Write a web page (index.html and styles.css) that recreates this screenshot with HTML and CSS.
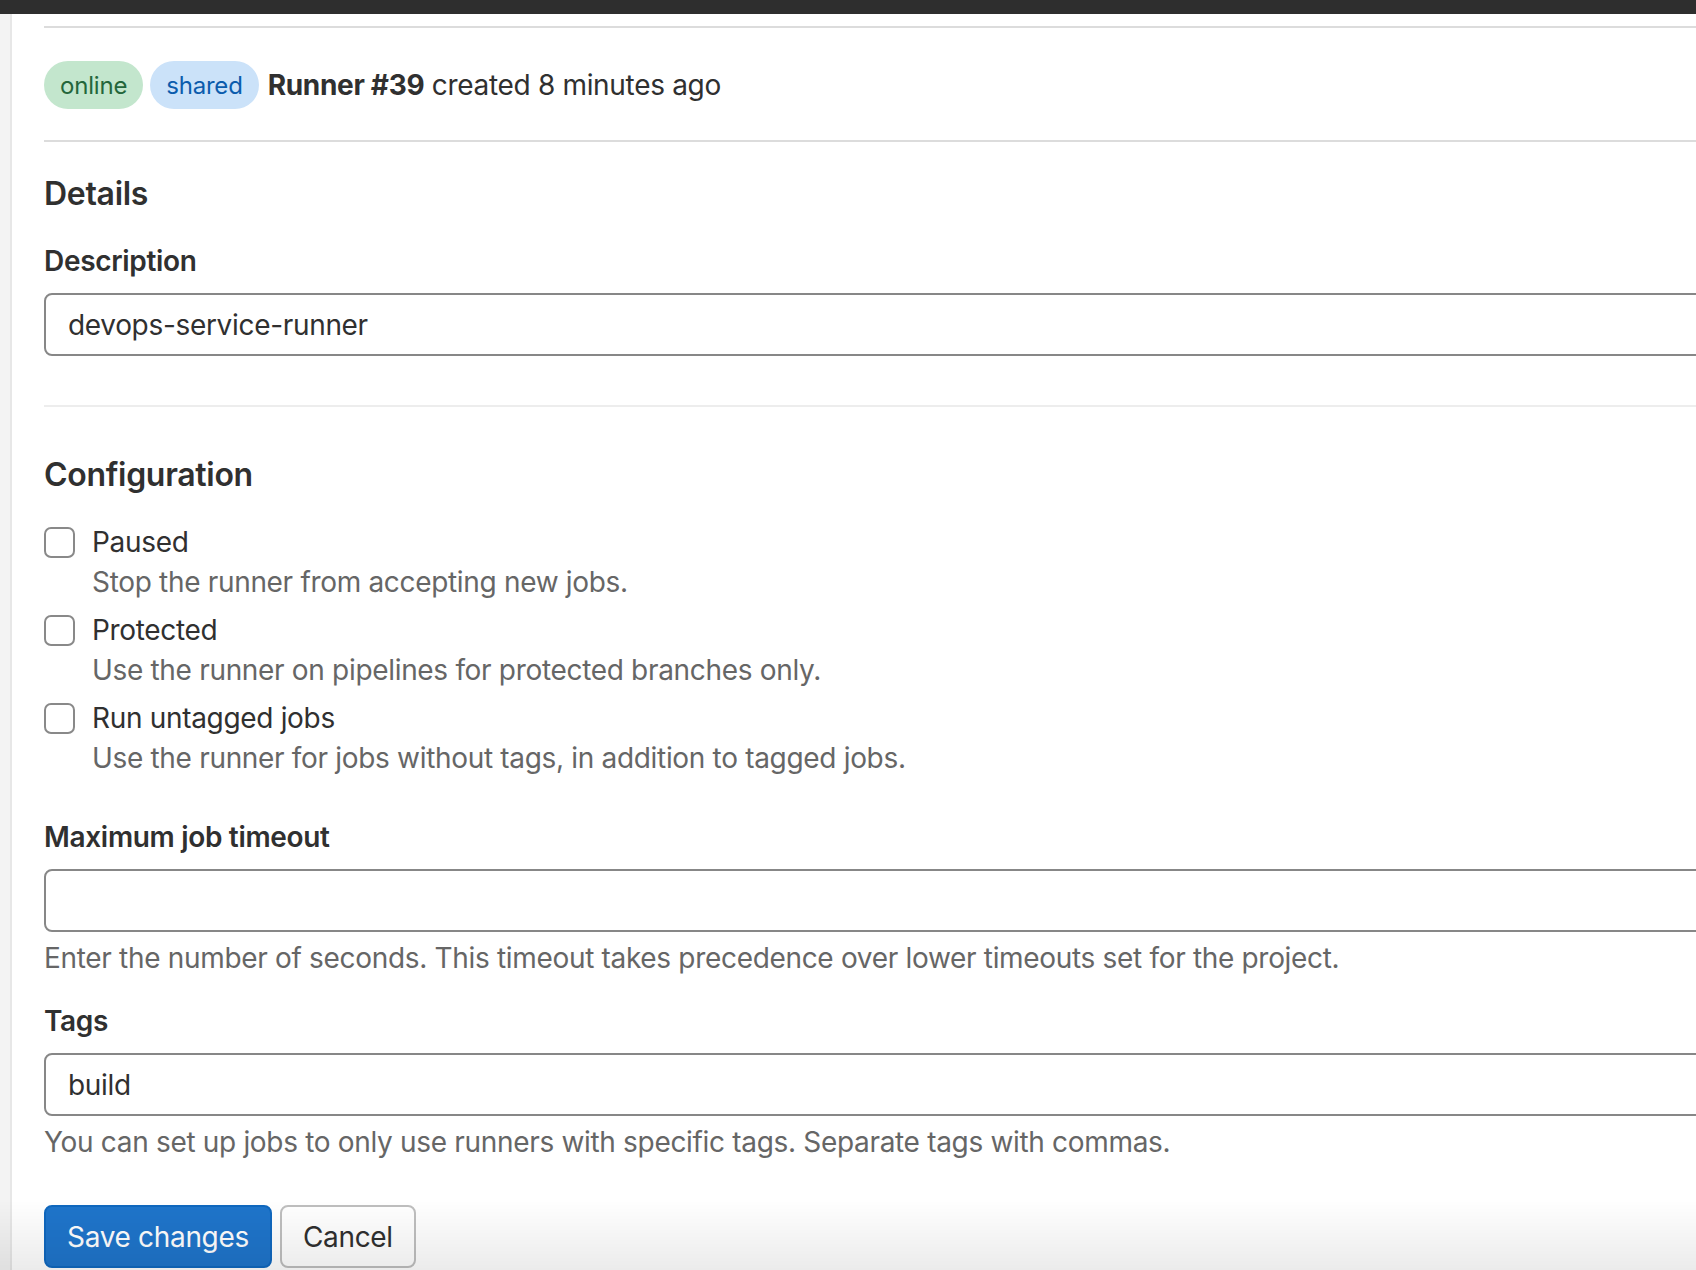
FILE: index.html
```html
<!DOCTYPE html>
<html lang="en">
<head>
<meta charset="utf-8">
<title>Runner #39</title>
<link rel="stylesheet" href="styles.css">
</head>
<body>
<div class="topbar"></div>
<div class="layout">
  <aside class="sidebar"></aside>
  <main class="content">
    <hr class="rule">
    <header class="runner-header">
      <span class="badge badge-online">online</span>
      <span class="badge badge-shared">shared</span>
      <span class="runner-title"><strong>Runner #39</strong> created 8 minutes ago</span>
    </header>
    <hr class="rule">
    <section class="section">
      <h2 class="section-title">Details</h2>
      <label class="field-label" for="desc">Description</label>
      <input class="text-input" id="desc" type="text" value="devops-service-runner">
    </section>
    <hr class="rule rule-light">
    <section class="section">
      <h2 class="section-title section-title-config">Configuration</h2>
      <div class="check-row">
        <span class="checkbox"></span>
        <div class="check-text">
          <div class="check-label">Paused</div>
          <div class="help">Stop the runner from accepting new jobs.</div>
        </div>
      </div>
      <div class="check-row">
        <span class="checkbox"></span>
        <div class="check-text">
          <div class="check-label">Protected</div>
          <div class="help">Use the runner on pipelines for protected branches only.</div>
        </div>
      </div>
      <div class="check-row">
        <span class="checkbox"></span>
        <div class="check-text">
          <div class="check-label">Run untagged jobs</div>
          <div class="help">Use the runner for jobs without tags, in addition to tagged jobs.</div>
        </div>
      </div>

      <label class="field-label field-label-timeout" for="timeout">Maximum job timeout</label>
      <input class="text-input" id="timeout" type="text" value="">
      <div class="help">Enter the number of seconds. This timeout takes precedence over lower timeouts set for the project.</div>

      <label class="field-label field-label-tags" for="tags">Tags</label>
      <input class="text-input" id="tags" type="text" value="build">
      <div class="help">You can set up jobs to only use runners with specific tags. Separate tags with commas.</div>

      <div class="actions">
        <button class="btn btn-primary" type="button">Save changes</button>
        <button class="btn btn-default" type="button">Cancel</button>
      </div>
    </section>
  </main>
</div>
<div class="bottom-fade"></div>
</body>
</html>
```

FILE: styles.css
```css
html, body {
  margin: 0;
  padding: 0;
  height: 100%;
  overflow: hidden;
  background: #ffffff;
}

body {
  font-family: Inter, "Noto Sans", "Liberation Sans", sans-serif;
  font-size: 28px;
  letter-spacing: -0.32px;
  color: #303030;
}

.topbar {
  height: 14px;
  background: #2e2e2e;
}

.layout {
  display: flex;
  height: calc(100% - 14px);
}

.sidebar {
  width: 10px;
  flex: 0 0 10px;
  background: #f3f3f3;
  border-right: 2px solid #e7e7e7;
}

.content {
  flex: 1 1 auto;
  padding-left: 32px;
  margin-right: -40px;
  min-width: 0;
}

.rule {
  border: 0;
  height: 2px;
  background: #dcdcdc;
  margin: 12px 0 0;
}

.rule-light {
  background: #ededed;
  margin-top: 49px;
}

.runner-header {
  display: flex;
  align-items: center;
  gap: 7px;
  height: 48px;
  margin: 33px 0 31px;
}

.badge {
  display: inline-flex;
  align-items: center;
  height: 48px;
  padding: 0 16px;
  border-radius: 24px;
  font-size: 24px;
  letter-spacing: -0.2px;
  box-sizing: border-box;
}

.badge-online {
  background: #c3e6cd;
  color: #24663b;
}

.badge-shared {
  background: #cbe2f9;
  color: #0b5cad;
}

.runner-title {
  margin-left: 2px;
  font-size: 28px;
}

.runner-title strong {
  font-weight: 700;
}

.section {
  display: flex;
  flex-direction: column;
  align-items: flex-start;
}

.section-title {
  font-size: 32px;
  font-weight: 600;
  line-height: 40px;
  letter-spacing: -0.3px;
  margin: 32px 0 0;
}

.section-title-config {
  margin-top: 48px;
}

.field-label {
  font-weight: 600;
  font-size: 28px;
  line-height: 40px;
  margin-top: 27px;
}

.field-label-timeout {
  margin-top: 39px;
}

.field-label-tags {
  margin-top: 23px;
}

.text-input {
  box-sizing: border-box;
  width: 100%;
  height: 63px;
  margin-top: 12px;
  padding: 0 22px;
  border: 2px solid #878787;
  border-radius: 8px;
  font-family: inherit;
  font-size: 28px;
  letter-spacing: -0.32px;
  color: #303030;
  background: #ffffff;
  outline: none;
}

.help {
  color: #666666;
  font-size: 28px;
  line-height: 40px;
  margin-top: 6px;
}

.check-text .help {
  margin-top: 0;
}

.check-row {
  display: flex;
  align-items: flex-start;
  gap: 17px;
  margin-top: 27px;
}

.check-row + .check-row {
  margin-top: 8px;
}

.checkbox {
  box-sizing: border-box;
  width: 31px;
  height: 31px;
  margin-top: 5px;
  border: 2px solid #898989;
  border-radius: 7px;
  background: #ffffff;
  flex: 0 0 31px;
}

.check-label {
  line-height: 40px;
}

.actions {
  display: flex;
  gap: 8px;
  margin-top: 43px;
}

.btn {
  box-sizing: border-box;
  height: 63px;
  padding: 0 21px;
  border-radius: 8px;
  font-family: inherit;
  font-size: 28px;
  letter-spacing: -0.32px;
}

.btn-primary {
  background: #1f75cb;
  border: 2px solid #1068bf;
  color: #ffffff;
}

.btn-default {
  background: #ffffff;
  border: 2px solid #bfbfbf;
  color: #303030;
}

.bottom-fade {
  position: fixed;
  left: 0;
  right: 0;
  bottom: 0;
  height: 70px;
  pointer-events: none;
  background: linear-gradient(to bottom, rgba(0, 0, 0, 0), rgba(0, 0, 0, 0.08));
}
```
